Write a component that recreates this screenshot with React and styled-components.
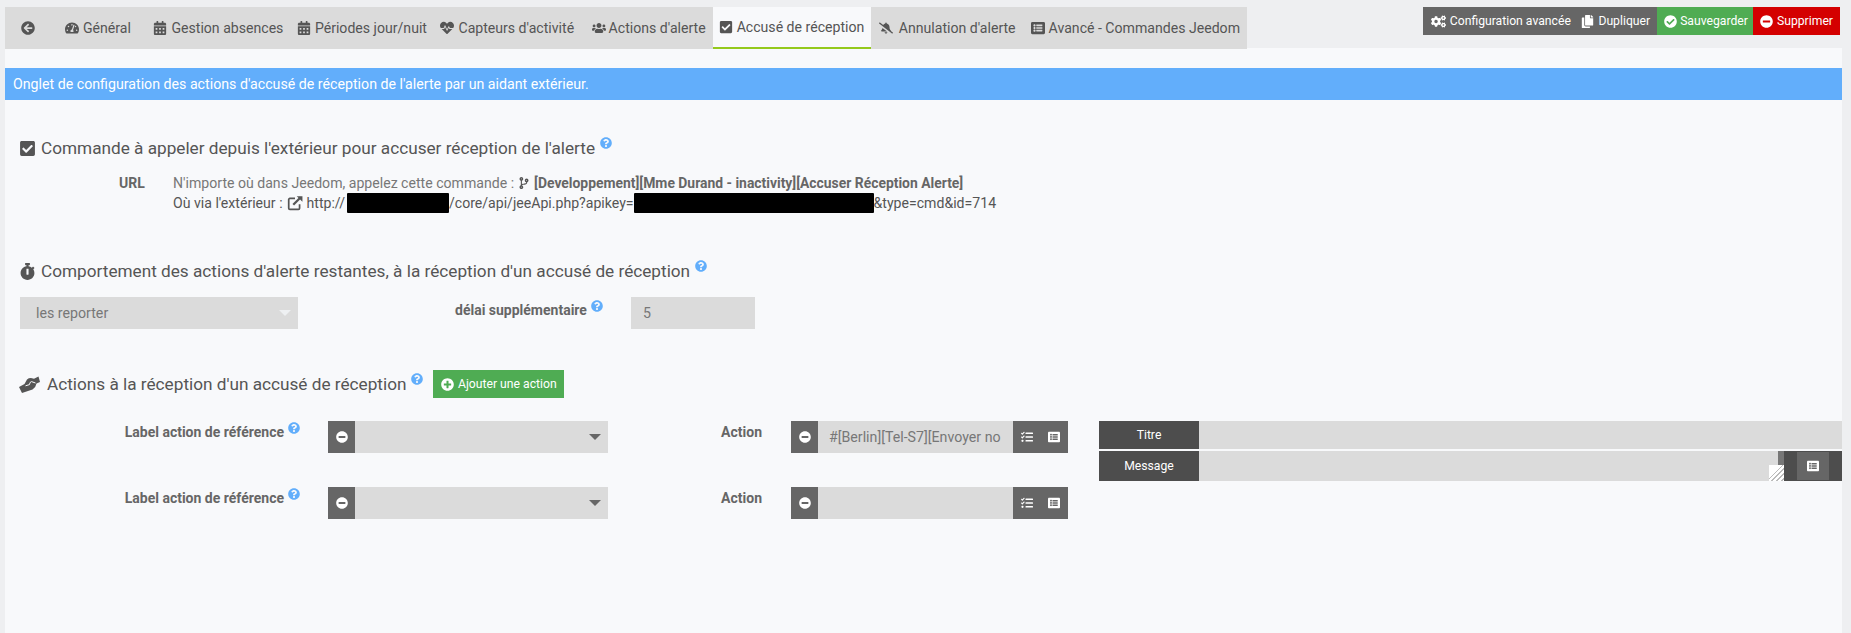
import React from 'react';
import styled, { createGlobalStyle } from 'styled-components';
import {
  FaArrowCircleLeft, FaTachometerAlt, FaCalendarAlt, FaHeartbeat, FaUsers, FaCheckSquare,
  FaBellSlash, FaListAlt, FaCogs, FaCopy, FaCheckCircle, FaMinusCircle, FaPlusCircle,
  FaQuestionCircle, FaCodeBranch, FaStopwatch, FaTasks,
} from 'react-icons/fa';

const Global = createGlobalStyle`
  html, body { margin: 0; height: 100%; background: #eeeff1; overflow: hidden; }
  body { font-family: Roboto, "Liberation Sans", sans-serif; color: #555; }
  #root { height: 100%; }
`;

const Page = styled.div`
  display: flex;
  flex-direction: column;
  height: 100%;
  padding: 7px 9px 0 5px;
  box-sizing: border-box;
`;
const Header = styled.div`
  display: flex;
  justify-content: space-between;
  align-items: flex-start;
  position: relative;
  z-index: 1;
  margin-bottom: -1px;
`;
const TabBar = styled.div`
  display: flex;
  height: 42px;
  background: #dbdbdb;
`;
const Tab = styled.div`
  display: flex;
  align-items: center;
  gap: ${p => p.$gap || 4}px;
  box-sizing: border-box;
  height: 42px;
  padding: 0 ${p => p.$right ?? 7.5}px 0 ${p => p.$left ?? 7.5}px;
  margin-left: ${p => p.$offset || 0}px;
  font-size: 14.1px;
  white-space: nowrap;
  color: #555;
  background: ${p => (p.$active ? '#f8f9fb' : 'transparent')};
  border-bottom: ${p => (p.$active ? '2px solid #94c91c' : '0')};
  svg { font-size: 14px; flex: none; }
`;
const Actions = styled.div`
  display: flex;
  height: 28px;
  margin-right: 2px;
`;
const ActionButton = styled.div`
  display: flex;
  align-items: center;
  gap: ${p => p.$gap || 4}px;
  padding: 0 ${p => p.$right ?? 7}px 0 ${p => p.$left ?? 7}px;
  font-size: 12.2px;
  color: #fff;
  white-space: nowrap;
  background: ${p => p.$bg || '#666'};
  svg { font-size: ${p => p.$icon || 13}px; flex: none; }
`;
const Panel = styled.div`
  flex: 1;
  background: #f8f9fb;
  padding-top: 20px;
`;
const Notice = styled.div`
  height: 32px;
  line-height: 32px;
  padding-left: 8px;
  background: #62aefb;
  color: #fff;
  font-size: 14.2px;
`;
const Section = styled.section`
  padding: ${p => p.$top}px 0 0 14px;
`;
const Title = styled.div`
  display: flex;
  align-items: center;
  height: 24px;
  font-size: 17.2px;
  color: #555;
  white-space: nowrap;
  > svg:first-child { font-size: 17px; flex: none; margin-right: ${p => p.$iconGap || 5}px; }
`;
const Help = styled(FaQuestionCircle)`
  color: #62aefb;
  font-size: 12px;
  flex: none;
  margin-left: 5px;
  position: relative;
  top: -5px;
`;
const UrlBlock = styled.div`
  display: grid;
  grid-template-columns: 26px 1fr;
  column-gap: 28px;
  margin: 13px 0 0 100px;
  font-size: 14.1px;
  line-height: 20px;
`;
const StrongLabel = styled.div`
  font-weight: 700;
  font-size: 14px;
  color: #666;
  white-space: nowrap;
`;
const UrlLine = styled.div`
  display: flex;
  align-items: center;
  white-space: nowrap;
  color: ${p => (p.$muted ? '#777' : '#555')};
  svg { font-size: 12px; margin: 0 4px; flex: none; color: #555; }
  b { color: #666; font-size: 13.9px; }
`;
const Redacted = styled.span`
  display: inline-block;
  width: ${p => p.$w}px;
  height: 20px;
  margin-left: ${p => p.$offset || 0}px;
  background: #000;
  border-radius: 1px;
`;
const DelayRow = styled.div`
  display: flex;
  align-items: flex-start;
  margin: 14px 0 0 1px;
`;
const SelectBox = styled.div`
  display: flex;
  align-items: center;
  justify-content: space-between;
  box-sizing: border-box;
  width: 278px;
  height: 32px;
  padding: 0 7px 0 16px;
  background: #dbdbdb;
  color: #777;
  font-size: 14.2px;
`;
const Arrow = styled.i`
  width: 0;
  height: 0;
  border-left: 6px solid transparent;
  border-right: 6px solid transparent;
  border-top: 6px solid ${p => (p.$light ? '#eef0f2' : '#666')};
`;
const DelayLabel = styled.div`
  display: flex;
  align-items: flex-start;
  margin: 5px 28px 0 157px;
  line-height: 15px;
  padding-top: 1px;
  svg { top: -3px; margin-left: 4px; }
`;
const PlainInput = styled.div`
  box-sizing: border-box;
  width: 124px;
  height: 32px;
  line-height: 32px;
  padding-left: 12px;
  background: #dbdbdb;
  color: #777;
  font-size: 14.2px;
`;
const AddButton = styled.div`
  display: flex;
  align-items: center;
  gap: 4px;
  height: 28px;
  padding: 0 7.5px;
  margin-left: 10px;
  background: #4fac53;
  color: #fff;
  font-size: 12.2px;
  svg { font-size: 13px; }
`;
const FormLine = styled.div`
  display: flex;
  align-items: flex-start;
  height: 32px;
  margin: ${p => p.$top}px 0 0 112px;
`;
const RowLabel = styled.div`
  display: flex;
  justify-content: flex-end;
  width: ${p => p.$w}px;
  flex: none;
  padding-top: 4px;
  line-height: 15px;
  svg { top: -3px; margin-left: 4px; }
`;
const InputGroup = styled.div`
  display: flex;
  width: ${p => p.$w}px;
  height: 32px;
  flex: none;
  margin-left: ${p => p.$offset}px;
`;
const GroupBtn = styled.div`
  display: flex;
  align-items: center;
  justify-content: center;
  gap: 15px;
  width: ${p => p.$w}px;
  flex: none;
  background: #666;
  color: #fff;
  svg { font-size: 12px; }
`;
const GroupInput = styled.div`
  flex: 1;
  min-width: 0;
  display: flex;
  align-items: center;
  justify-content: space-between;
  padding: 0 7px 0 11px;
  background: #dbdbdb;
  color: #777;
  font-size: 14.2px;
  white-space: nowrap;
  overflow: hidden;
`;
const MessageBlock = styled.div`
  display: grid;
  grid-template-columns: 100px 1fr;
  row-gap: 2px;
  flex: 1;
  margin-left: 31px;
`;
const AddonLabel = styled.div`
  display: flex;
  align-items: center;
  justify-content: center;
  height: ${p => p.$h}px;
  background: #4d4d4d;
  color: #fff;
  font-size: 12.2px;
`;
const TitleField = styled.div`
  background: #dbdbdb;
`;
const MessageField = styled.div`
  display: flex;
  height: 30px;
`;
const TextArea = styled.div`
  flex: 1;
  background: #dbdbdb;
  position: relative;
`;
const ResizeCorner = styled.div`
  position: absolute;
  right: 0;
  bottom: 0;
  width: 15px;
  height: 16px;
  background:
    linear-gradient(135deg, #fff 0 42%, transparent 42%),
    repeating-linear-gradient(135deg, #fff 0 2px, #bbb 2px 3.5px);
`;
const ScrollThumb = styled.div`
  position: absolute;
  right: 0;
  top: 0;
  width: 6px;
  height: 14px;
  background: #777;
`;
const MessageTools = styled.div`
  display: flex;
  justify-content: center;
  align-items: center;
  width: 58px;
  background: #4d4d4d;
`;
const ToolButton = styled.div`
  display: flex;
  align-items: center;
  justify-content: center;
  width: 32px;
  height: 28px;
  background: #666;
  color: #fff;
  svg { font-size: 12px; }
`;

// FontAwesome 4 style external link, the icon packages only have the solid one
const ExternalLink = () => (
  <svg width="16" height="16" viewBox="0 0 14 14" fill="none" stroke="currentColor">
    <path d="M11 8v3.5a1 1 0 0 1-1 1H2.5a1 1 0 0 1-1-1V4a1 1 0 0 1 1-1H7" strokeWidth="1.5" />
    <path d="M5.5 8.5L12 2" strokeWidth="2" />
    <path d="M8.5 1h5v5z" fill="currentColor" stroke="none" />
  </svg>
);

// the handshake of the plugin icon: two hands turned about 30 degrees
const Handshake = () => (
  <svg width="21" height="17" viewBox="0 0 21 17">
    <path fill="currentColor" d="M0 11L5.5 8 8 3.5Q10 1.8 13 2.2L15 2.8 19.5.5 21 6 17.5 7.5Q17 11 13.5 13.6L9 15 3 17z" />
    <path fill="none" stroke="#f8f9fb" strokeWidth="1" d="M6.5 9.8L10.5 8.6Q10.6 6 12.5 5.6L16.5 7" />
  </svg>
);

const tabs = [
  { icon: <FaTachometerAlt />, label: 'Général', $left: 8, $right: 7 },
  { icon: <FaCalendarAlt />, label: 'Gestion absences', $offset: 8, $right: 6 },
  { icon: <FaCalendarAlt />, label: 'Périodes jour/nuit', $right: 6 },
  { icon: <FaHeartbeat />, label: "Capteurs d'activité", $right: 10 },
  { icon: <FaUsers />, label: "Actions d'alerte", $gap: 3, $right: 7 },
  { icon: <FaCheckSquare />, label: 'Accusé de réception', $active: true, $left: 6, $right: 7 },
  { icon: <FaBellSlash />, label: "Annulation d'alerte", $gap: 6 },
  { icon: <FaListAlt />, label: 'Avancé - Commandes Jeedom', $right: 7 },
];

const ActionLine = ({ top, value, extra }) => (
  <FormLine $top={top}>
    <RowLabel $w={169}>
      <StrongLabel>Label action de référence</StrongLabel>
      <Help />
    </RowLabel>
    <InputGroup $w={280} $offset={28}>
      <GroupBtn $w={27}><FaMinusCircle /></GroupBtn>
      <GroupInput><span /><Arrow /></GroupInput>
    </InputGroup>
    <RowLabel $w={154}>
      <StrongLabel>Action</StrongLabel>
    </RowLabel>
    <InputGroup $w={277} $offset={29}>
      <GroupBtn $w={27}><FaMinusCircle /></GroupBtn>
      <GroupInput>{value}</GroupInput>
      <GroupBtn $w={55}><FaTasks /><FaListAlt /></GroupBtn>
    </InputGroup>
    {extra}
  </FormLine>
);

export default function App() {
  return (
    <Page>
      <Global />
      <Header>
        <TabBar>
          <Tab $left={16} $right={22}><FaArrowCircleLeft /></Tab>
          {tabs.map(({ icon, label, ...rest }) => (
            <Tab key={label} {...rest}>{icon}{label}</Tab>
          ))}
        </TabBar>
        <Actions>
          <ActionButton $left={8} $right={3.5} $icon={15}><FaCogs />Configuration avancée</ActionButton>
          <ActionButton><FaCopy />Dupliquer</ActionButton>
          <ActionButton $bg="#4fac53" $right={5} $gap={3}><FaCheckCircle />Sauvegarder</ActionButton>
          <ActionButton $bg="#d40000"><FaMinusCircle />Supprimer</ActionButton>
        </Actions>
      </Header>
      <Panel>
        <Notice>Onglet de configuration des actions d'accusé de réception de l'alerte par un aidant extérieur.</Notice>

        <Section $top={36}>
          <Title><FaCheckSquare />Commande à appeler depuis l'extérieur pour accuser réception de l'alerte<Help /></Title>
          <UrlBlock>
            <StrongLabel>URL</StrongLabel>
            <div>
              <UrlLine $muted>N'importe où dans Jeedom, appelez cette commande :<FaCodeBranch /><b>[Developpement][Mme Durand - inactivity][Accuser Réception Alerte]</b></UrlLine>
              <UrlLine>
                <span>Où via l'extérieur :</span><ExternalLink />http://<Redacted $w={102} $offset={2} />/core/api/jeeApi.php?apikey=<Redacted $w={240} />&amp;type=cmd&amp;id=714
              </UrlLine>
            </div>
          </UrlBlock>
        </Section>

        <Section $top={46}>
          <Title><FaStopwatch />Comportement des actions d'alerte restantes, à la réception d'un accusé de réception<Help /></Title>
          <DelayRow>
            <SelectBox>les reporter<Arrow $light /></SelectBox>
            <DelayLabel>
              <StrongLabel>délai supplémentaire</StrongLabel>
              <Help />
            </DelayLabel>
            <PlainInput>5</PlainInput>
          </DelayRow>
        </Section>

        <Section $top={43}>
          <Title $iconGap={7}>
            <Handshake />Actions à la réception d'un accusé de réception<Help />
            <AddButton><FaPlusCircle />Ajouter une action</AddButton>
          </Title>
          <ActionLine
            top={25}
            value="#[Berlin][Tel-S7][Envoyer no"
            extra={
              <MessageBlock>
                <AddonLabel $h={28}>Titre</AddonLabel>
                <TitleField />
                <AddonLabel $h={30}>Message</AddonLabel>
                <MessageField>
                  <TextArea><ScrollThumb /><ResizeCorner /></TextArea>
                  <MessageTools><ToolButton><FaListAlt /></ToolButton></MessageTools>
                </MessageField>
              </MessageBlock>
            }
          />
          <ActionLine top={34} />
        </Section>
      </Panel>
    </Page>
  );
}
